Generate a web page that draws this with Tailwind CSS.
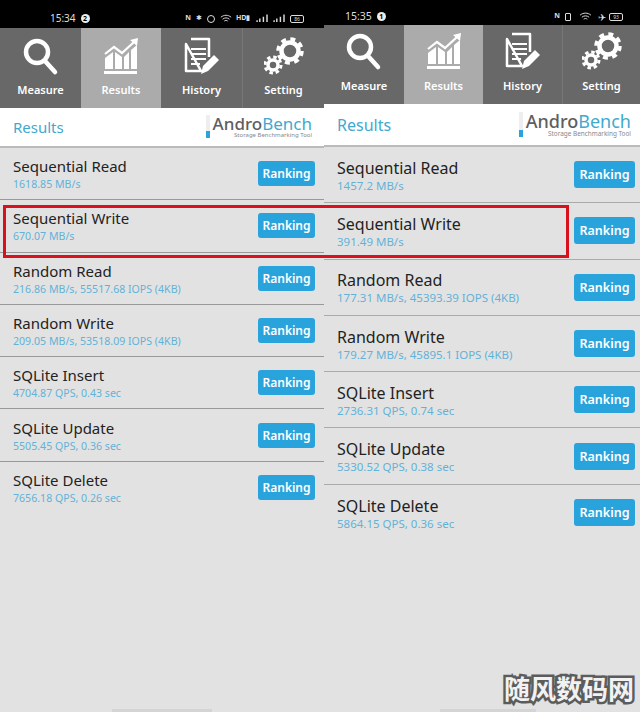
<!DOCTYPE html>
<html lang="en">
<head>
    <meta charset="UTF-8">
    <title>AndroBench Results</title>
    <script src="https://cdn.jsdelivr.net/npm/@tailwindcss/browser@4"></script>
</head>
<body class="bg-[#e2e2e2] font-['Noto_Sans',sans-serif]">
    <!-- shared icons -->
    <svg class="hidden">
        <symbol id="icon-measure" viewBox="0 0 40 40">
            <circle cx="16" cy="15" r="11" fill="none" stroke="#fff" stroke-width="4.5"/>
            <path d="M24 24 L34 35" stroke="#fff" stroke-width="4.5" stroke-linecap="round"/>
        </symbol>
        <symbol id="icon-results" viewBox="0 0 40 40">
            <path d="M4 17 L13 10 L21 16 L33 5" fill="none" stroke="#fff" stroke-width="2.2"/>
            <path d="M29 3 L37 1 L36 9 Z" fill="#fff"/>
            <path d="M4 21 L12 15 V32 H4 Z M14 15 L21 20 V32 H14 Z M23 20 L28 15 V32 H23 Z M30 13 L36 8 V32 H30 Z" fill="#fff"/>
            <rect x="3" y="34" width="33" height="3" fill="#fff"/>
        </symbol>
        <symbol id="icon-history" viewBox="0 0 40 40">
            <path d="M9 2 H27 V20 M19 34 H4 V7 Z" fill="none" stroke="#fff" stroke-width="2.5" stroke-linejoin="round"/>
            <path d="M9 12 H24 M9 17 H24 M9 22 H24 M9 27 H18" stroke="#fff" stroke-width="2.2"/>
            <path d="M32 18 L37 23 L26 34 L19 37 L21 29 Z" fill="#fff"/>
        </symbol>
        <symbol id="icon-setting" viewBox="0 0 40 40">
            <circle cx="26" cy="14" r="8.5" fill="none" stroke="#fff" stroke-width="4.5"/>
            <circle cx="26" cy="14" r="12" fill="none" stroke="#fff" stroke-width="3.5" stroke-dasharray="5 4.42"/>
            <circle cx="9" cy="28" r="5" fill="none" stroke="#fff" stroke-width="3.5"/>
            <circle cx="9" cy="28" r="8" fill="none" stroke="#fff" stroke-width="3" stroke-dasharray="3.5 2.78"/>
        </symbol>
        <symbol id="icon-wifi" viewBox="0 0 14 10">
            <path d="M1 3.5 C4.5 .5 9.5 .5 13 3.5 M3 5.8 C5.5 3.8 8.5 3.8 11 5.8 M5 8 C6.2 7 7.8 7 9 8" fill="none" stroke="#ddd" stroke-width="1.1"/>
        </symbol>
        <symbol id="icon-signal" viewBox="0 0 14 10">
            <path d="M1 9 V7 M4 9 V5 M8 9 V3 M12 9 V0.5" stroke="#ddd" stroke-width="1.6"/>
        </symbol>
    </svg>

    <main class="relative h-[712px] w-[640px] overflow-hidden flex">
        <!-- left phone -->
        <section class="w-[324px] shrink-0">
            <div class="h-[28px] bg-black flex items-center text-[#ddd] pt-[9px]">
                <span class="ml-[50px] text-[10px]">15:34</span>
                <span class="ml-[5px] w-[9px] h-[9px] rounded-full bg-[#eee] text-black text-[7px] leading-[9px] text-center font-bold">2</span>
                <div class="ml-auto mr-[20px] flex items-center gap-[4px] text-[7px]">
                    <span class="font-bold">N</span>
                    <span class="ml-[1px]">✱</span>
                    <span class="ml-[1px] w-[8px] h-[8px] rounded-full border border-[#ddd]"></span>
                    <svg class="ml-[1px] w-[12px] h-[9px]"><use href="#icon-wifi"/></svg>
                    <span class="font-bold w-[16px]">HD▮</span>
                    <svg class="w-[13px] h-[9px]"><use href="#icon-signal"/></svg>
                    <svg class="w-[13px] h-[9px]"><use href="#icon-signal"/></svg>
                    <span class="w-[14px] h-[8px] rounded-[2px] border border-[#ddd] text-[5px] leading-[6px] text-center">86</span>
                </div>
            </div>
            <nav class="h-[80px] flex bg-[#686868] text-white text-[11px] font-semibold text-center">
                <div class="w-[81px] pt-[9px]"><svg class="w-[40px] h-[40px] mx-auto"><use href="#icon-measure"/></svg><div class="mt-[5px]">Measure</div></div>
                <div class="w-[80px] pt-[9px] bg-[#ababab]"><svg class="w-[40px] h-[40px] mx-auto"><use href="#icon-results"/></svg><div class="mt-[5px]">Results</div></div>
                <div class="w-[82px] pt-[9px] border-r border-[#777]"><svg class="w-[40px] h-[40px] mx-auto"><use href="#icon-history"/></svg><div class="mt-[5px]">History</div></div>
                <div class="w-[81px] pt-[9px]"><svg class="w-[40px] h-[40px] mx-auto"><use href="#icon-setting"/></svg><div class="mt-[5px]">Setting</div></div>
            </nav>
            <header class="h-[40px] bg-white border-b-2 border-[#bbb] flex items-center justify-between pl-[13px] pr-[12px]">
                <span class="text-[15px] text-[#3fa9cf] pt-[1px]">Results</span>
                <div class="flex gap-[3px]">
                    <div class="w-[4px] h-[23px] bg-[linear-gradient(#eee_70%,#29a3dc_70%)]"></div>
                    <div class="text-right">
                        <div class="text-[17px] leading-[17px] font-medium text-[#5e5e5e]">Andro<span class="font-normal text-[#3fa9cf]">Bench</span></div>
                        <div class="text-[6px] leading-[7px] text-[#888]">Storage Benchmarking Tool</div>
                    </div>
                </div>
            </header>
            <div class="text-[#222]">
                <div class="h-[52.3px] border-b border-[#999] flex items-center justify-between pl-[13px] pr-[9px]">
                    <div class="pt-[2px]"><div class="text-[15px] leading-[19px]">Sequential Read</div><div class="mt-[1px] text-[10.6px] leading-[15px] text-[#62b2d8]">1618.85 MB/s</div></div>
                    <div class="w-[57px] h-[25px] rounded-[3px] bg-[#29a3dc] text-white text-[12px] font-semibold leading-[25px] text-center">Ranking</div>
                </div>
                <div class="h-[52.3px] border-b border-[#999] flex items-center justify-between pl-[13px] pr-[9px]">
                    <div class="pt-[2px]"><div class="text-[15px] leading-[19px]">Sequential Write</div><div class="mt-[1px] text-[10.6px] leading-[15px] text-[#62b2d8]">670.07 MB/s</div></div>
                    <div class="w-[57px] h-[25px] rounded-[3px] bg-[#29a3dc] text-white text-[12px] font-semibold leading-[25px] text-center">Ranking</div>
                </div>
                <div class="h-[52.3px] border-b border-[#999] flex items-center justify-between pl-[13px] pr-[9px]">
                    <div class="pt-[2px]"><div class="text-[15px] leading-[19px]">Random Read</div><div class="mt-[1px] text-[10.6px] leading-[15px] text-[#62b2d8]">216.86 MB/s, 55517.68 IOPS (4KB)</div></div>
                    <div class="w-[57px] h-[25px] rounded-[3px] bg-[#29a3dc] text-white text-[12px] font-semibold leading-[25px] text-center">Ranking</div>
                </div>
                <div class="h-[52.3px] border-b border-[#999] flex items-center justify-between pl-[13px] pr-[9px]">
                    <div class="pt-[2px]"><div class="text-[15px] leading-[19px]">Random Write</div><div class="mt-[1px] text-[10.6px] leading-[15px] text-[#62b2d8]">209.05 MB/s, 53518.09 IOPS (4KB)</div></div>
                    <div class="w-[57px] h-[25px] rounded-[3px] bg-[#29a3dc] text-white text-[12px] font-semibold leading-[25px] text-center">Ranking</div>
                </div>
                <div class="h-[52.3px] border-b border-[#999] flex items-center justify-between pl-[13px] pr-[9px]">
                    <div class="pt-[2px]"><div class="text-[15px] leading-[19px]">SQLite Insert</div><div class="mt-[1px] text-[10.6px] leading-[15px] text-[#62b2d8]">4704.87 QPS, 0.43 sec</div></div>
                    <div class="w-[57px] h-[25px] rounded-[3px] bg-[#29a3dc] text-white text-[12px] font-semibold leading-[25px] text-center">Ranking</div>
                </div>
                <div class="h-[52.3px] border-b border-[#999] flex items-center justify-between pl-[13px] pr-[9px]">
                    <div class="pt-[2px]"><div class="text-[15px] leading-[19px]">SQLite Update</div><div class="mt-[1px] text-[10.6px] leading-[15px] text-[#62b2d8]">5505.45 QPS, 0.36 sec</div></div>
                    <div class="w-[57px] h-[25px] rounded-[3px] bg-[#29a3dc] text-white text-[12px] font-semibold leading-[25px] text-center">Ranking</div>
                </div>
                <div class="h-[52.3px] flex items-center justify-between pl-[13px] pr-[9px]">
                    <div class="pt-[2px]"><div class="text-[15px] leading-[19px]">SQLite Delete</div><div class="mt-[1px] text-[10.6px] leading-[15px] text-[#62b2d8]">7656.18 QPS, 0.26 sec</div></div>
                    <div class="w-[57px] h-[25px] rounded-[3px] bg-[#29a3dc] text-white text-[12px] font-semibold leading-[25px] text-center">Ranking</div>
                </div>
            </div>
        </section>

        <!-- right phone -->
        <section class="w-[316px] shrink-0 relative bg-[#e2e2e2]">
            <div class="h-[25px] bg-black flex items-center text-[#ddd] pt-[8px]">
                <span class="ml-[21px] text-[10.5px]">15:35</span>
                <span class="ml-[5px] w-[9px] h-[9px] rounded-full bg-[#eee] text-black text-[7px] leading-[9px] text-center font-bold">1</span>
                <div class="ml-auto mr-[17px] flex items-center text-[7px]">
                    <span class="font-bold">N</span>
                    <span class="ml-[5px] w-[6px] h-[8px] rounded-[1px] border border-[#ddd]"></span>
                    <svg class="ml-[8px] w-[13px] h-[9px]"><use href="#icon-wifi"/></svg>
                    <span class="ml-[6px] text-[10px] leading-[10px]">✈</span>
                    <span class="ml-[3px] w-[14px] h-[8px] rounded-[2px] border border-[#ddd] text-[5px] leading-[6px] text-center">93</span>
                </div>
            </div>
            <nav class="h-[79px] flex bg-[#686868] text-white text-[11px] font-semibold text-center">
                <div class="w-[80px] pt-[7px]"><svg class="w-[40px] h-[40px] mx-auto"><use href="#icon-measure"/></svg><div class="mt-[6px]">Measure</div></div>
                <div class="w-[79px] pt-[7px] bg-[#ababab]"><svg class="w-[40px] h-[40px] mx-auto"><use href="#icon-results"/></svg><div class="mt-[6px]">Results</div></div>
                <div class="w-[80px] pt-[7px] border-r border-[#777]"><svg class="w-[40px] h-[40px] mx-auto"><use href="#icon-history"/></svg><div class="mt-[6px]">History</div></div>
                <div class="w-[77px] pt-[7px]"><svg class="w-[40px] h-[40px] mx-auto"><use href="#icon-setting"/></svg><div class="mt-[6px]">Setting</div></div>
            </nav>
            <header class="h-[43px] bg-white border-b-2 border-[#bbb] flex items-center justify-between pl-[13px] pr-[9px]">
                <span class="text-[16px] text-[#3fa9cf] pt-[1px]">Results</span>
                <div class="flex gap-[3px]">
                    <div class="w-[4px] h-[25px] bg-[linear-gradient(#eee_70%,#29a3dc_70%)]"></div>
                    <div class="text-right">
                        <div class="text-[18px] leading-[18px] font-medium text-[#5e5e5e]">Andro<span class="font-normal text-[#3fa9cf]">Bench</span></div>
                        <div class="text-[6.4px] leading-[7px] text-[#888]">Storage Benchmarking Tool</div>
                    </div>
                </div>
            </header>
            <div class="text-[#222]">
                <div class="h-[56.3px] border-b border-[#aaa] flex items-center justify-between pl-[13px] pr-[5px]">
                    <div class="pt-[2px]"><div class="text-[16px] leading-[20px]">Sequential Read</div><div class="text-[11.5px] leading-[16px] text-[#62b2d8]">1457.2 MB/s</div></div>
                    <div class="w-[61px] h-[27px] rounded-[3px] bg-[#29a3dc] text-white text-[12.5px] font-semibold leading-[27px] text-center">Ranking</div>
                </div>
                <div class="h-[56.3px] border-b border-[#aaa] flex items-center justify-between pl-[13px] pr-[5px]">
                    <div class="pt-[2px]"><div class="text-[16px] leading-[20px]">Sequential Write</div><div class="text-[11.5px] leading-[16px] text-[#62b2d8]">391.49 MB/s</div></div>
                    <div class="w-[61px] h-[27px] rounded-[3px] bg-[#29a3dc] text-white text-[12.5px] font-semibold leading-[27px] text-center">Ranking</div>
                </div>
                <div class="h-[56.3px] border-b border-[#aaa] flex items-center justify-between pl-[13px] pr-[5px]">
                    <div class="pt-[2px]"><div class="text-[16px] leading-[20px]">Random Read</div><div class="text-[11.5px] leading-[16px] text-[#62b2d8]">177.31 MB/s, 45393.39 IOPS (4KB)</div></div>
                    <div class="w-[61px] h-[27px] rounded-[3px] bg-[#29a3dc] text-white text-[12.5px] font-semibold leading-[27px] text-center">Ranking</div>
                </div>
                <div class="h-[56.3px] border-b border-[#aaa] flex items-center justify-between pl-[13px] pr-[5px]">
                    <div class="pt-[2px]"><div class="text-[16px] leading-[20px]">Random Write</div><div class="text-[11.5px] leading-[16px] text-[#62b2d8]">179.27 MB/s, 45895.1 IOPS (4KB)</div></div>
                    <div class="w-[61px] h-[27px] rounded-[3px] bg-[#29a3dc] text-white text-[12.5px] font-semibold leading-[27px] text-center">Ranking</div>
                </div>
                <div class="h-[56.3px] border-b border-[#aaa] flex items-center justify-between pl-[13px] pr-[5px]">
                    <div class="pt-[2px]"><div class="text-[16px] leading-[20px]">SQLite Insert</div><div class="text-[11.5px] leading-[16px] text-[#62b2d8]">2736.31 QPS, 0.74 sec</div></div>
                    <div class="w-[61px] h-[27px] rounded-[3px] bg-[#29a3dc] text-white text-[12.5px] font-semibold leading-[27px] text-center">Ranking</div>
                </div>
                <div class="h-[56.3px] border-b border-[#aaa] flex items-center justify-between pl-[13px] pr-[5px]">
                    <div class="pt-[2px]"><div class="text-[16px] leading-[20px]">SQLite Update</div><div class="text-[11.5px] leading-[16px] text-[#62b2d8]">5330.52 QPS, 0.38 sec</div></div>
                    <div class="w-[61px] h-[27px] rounded-[3px] bg-[#29a3dc] text-white text-[12.5px] font-semibold leading-[27px] text-center">Ranking</div>
                </div>
                <div class="h-[56.3px] flex items-center justify-between pl-[13px] pr-[5px]">
                    <div class="pt-[2px]"><div class="text-[16px] leading-[20px]">SQLite Delete</div><div class="text-[11.5px] leading-[16px] text-[#62b2d8]">5864.15 QPS, 0.36 sec</div></div>
                    <div class="w-[61px] h-[27px] rounded-[3px] bg-[#29a3dc] text-white text-[12.5px] font-semibold leading-[27px] text-center">Ranking</div>
                </div>
            </div>
            <!-- red highlight, right -->
            <div class="absolute left-0 top-[205px] w-[245px] h-[53px] border-[3px] border-l-0 border-[#d8111c]"></div>
            <!-- home indicator, right -->
            <div class="absolute left-[116px] top-[709px] w-[96px] h-[3px] bg-[#d4d4d4]"></div>
        </section>

        <!-- red highlight, left -->
        <div class="absolute left-[3px] top-[205px] w-[321px] h-[53px] border-[3px] border-r-0 border-[#d8111c]"></div>
        <!-- home indicator, left -->
        <div class="absolute left-[112px] top-[709px] w-[100px] h-[3px] bg-[#d4d4d4]"></div>
        <!-- watermark -->
        <div class="absolute left-[504px] top-[672px] text-[26px] leading-[32px] font-bold text-[#f2f2f2] font-['Noto_Sans_CJK_SC',sans-serif] [-webkit-text-stroke:5px_#5c5c5c] [paint-order:stroke_fill]">随风数码网</div>
    </main>
</body>
</html>
